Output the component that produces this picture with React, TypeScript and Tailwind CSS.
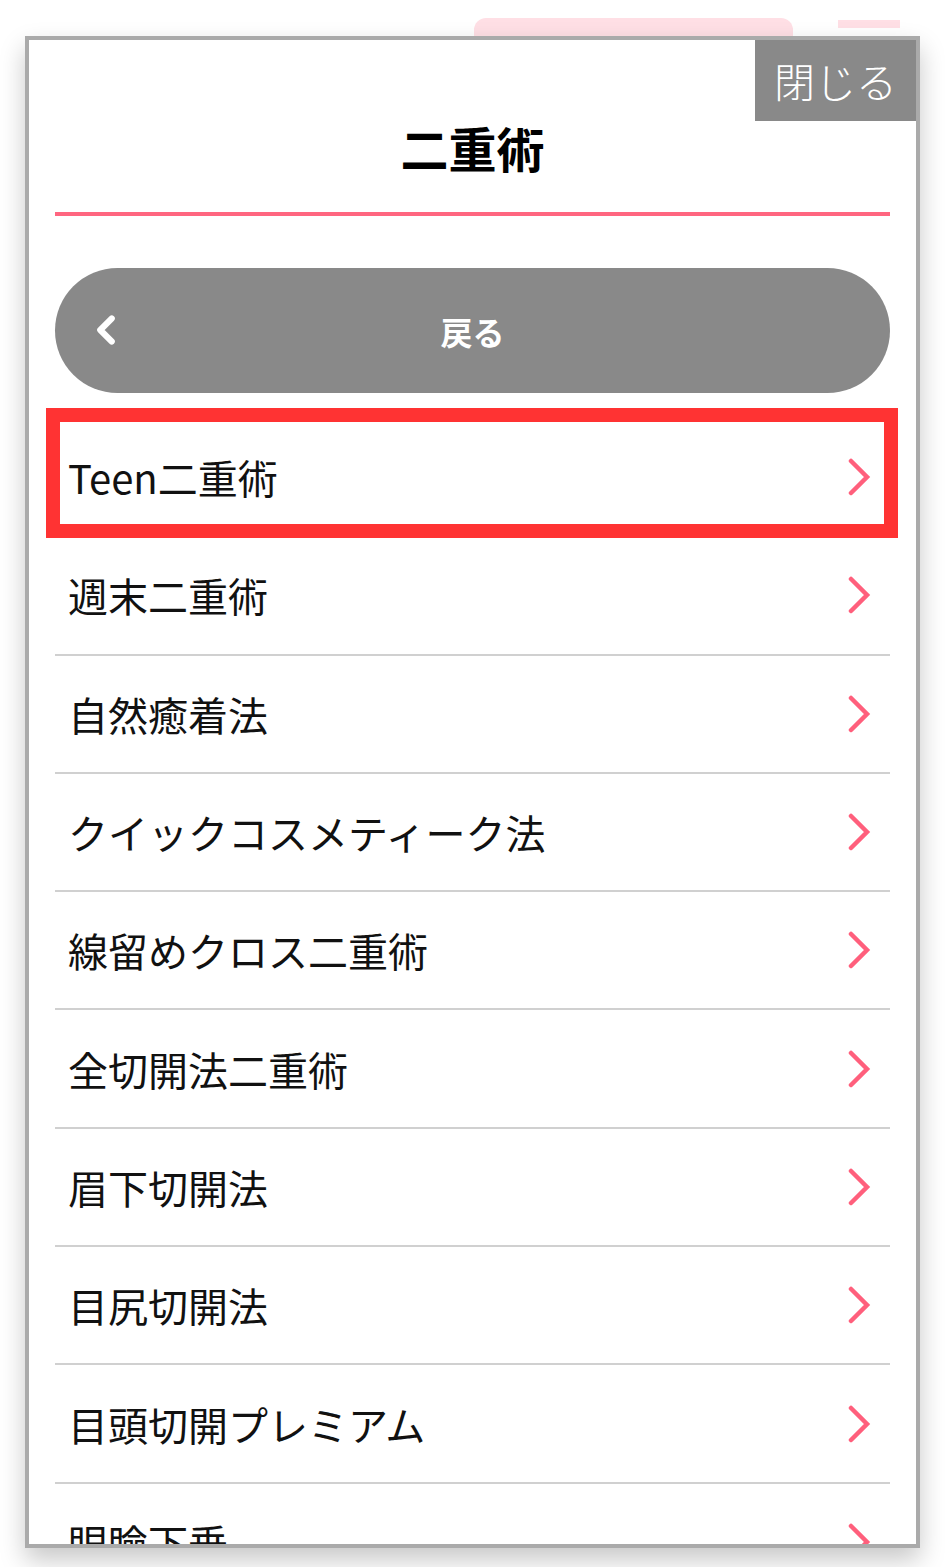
import {ChevronLeft} from "lucide-react";

const items = [
    'Teen二重術',
    '週末二重術',
    '自然癒着法',
    'クイックコスメティーク法',
    '線留めクロス二重術',
    '全切開法二重術',
    '眉下切開法',
    '目尻切開法',
    '目頭切開プレミアム',
    '眼瞼下垂',
];

function Arrow() {
    return (
        <svg width="24" height="38" viewBox="0 0 24 38" fill="none" className="text-[#ff5f7c]">
            <polyline points="4,3 20,19 4,35" stroke="currentColor" strokeWidth="4.5" strokeLinecap="round" strokeLinejoin="miter"/>
        </svg>
    );
}

export default function App() {
    return (
        <div className="relative h-[1567px] w-[945px] overflow-hidden bg-white font-['Noto_Sans_CJK_JP',sans-serif]">
            {/* page header behind the modal */}
            <div className="flex items-start pt-[18px]">
                <div className="ml-[474px] h-[60px] w-[319px] rounded-[12px] bg-[#ffdfe5] pt-[14px] text-center text-[20px] text-[#ffbfcb]">
                    お客様番号確認はこちら
                </div>
                <div className="ml-[45px] mt-[2px] h-[8px] w-[62px] bg-[#ffdfe5]"/>
            </div>

            {/* modal */}
            <div className="absolute left-[25px] top-[36px] h-[1512px] w-[895px] overflow-hidden border-4 border-[#aaaaaa] bg-white shadow-[0_12px_24px_rgba(0,0,0,0.22)]">
                <button className="absolute right-0 top-0 h-[81px] w-[161px] bg-[#898989] text-[41px] font-light leading-none text-white">
                    閉じる
                </button>

                <div className="px-[26px]">
                    <h2 className="pt-[77px] text-center text-[48px] font-bold leading-[60px] text-black">二重術</h2>
                    <div className="mt-[35px] h-[4px] bg-[#ff6680]"/>

                    <button className="relative mt-[52px] flex h-[125px] w-full items-center justify-center rounded-full bg-[#898989] text-[32px] font-bold text-white">
                        <ChevronLeft className="absolute left-[28px] top-[39px] h-[46px] w-[46px]" strokeWidth={3.2}/>
                        戻る
                    </button>

                    <ul className="mt-[26px]">
                        {items.map((item) => (
                            <li key={item}
                                className="flex h-[118.3px] items-center justify-between border-b-2 border-[#d0d0d0] pl-[13px] pr-[19px]">
                                <span className="text-[40px] leading-none text-[#111]">{item}</span>
                                <Arrow/>
                            </li>
                        ))}
                    </ul>
                </div>

                {/* highlight annotation */}
                <div className="absolute left-[17px] top-[368px] h-[130px] w-[852px] border-[14px] border-[#ff3333]"/>
            </div>
        </div>
    );
}
